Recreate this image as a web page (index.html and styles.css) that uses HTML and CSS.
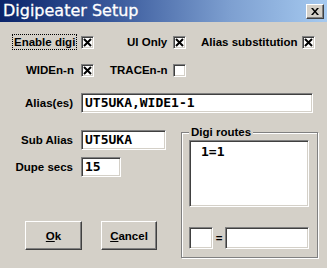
FILE: index.html
```html
<!DOCTYPE html>
<html lang="en">
<head>
  <meta charset="UTF-8" />
  <title>Digipeater Setup</title>
  <link rel="stylesheet" href="styles.css">
</head>
<body>
  <div class="dialog">
    <div class="titlebar">
      <span class="title">Digipeater Setup</span>
      <span class="close" aria-label="Close">
        <svg width="8" height="7" viewBox="0 0 8 7"><path d="M0 0h2l2 2.5L6 0h2L5 3.5L8 7H6L4 4.5L2 7H0l3-3.5z" fill="#000"/></svg>
      </span>
    </div>

    <div class="opts opts-a">
      <span class="lbl lbl-enable"><span class="focus-box">Enable digi</span></span>
      <span class="cb"><svg width="9" height="9" viewBox="0 0 9 9"><path d="M1 1l7 7M8 1L1 8" stroke="#000" stroke-width="2"/></svg></span>
      <span class="lbl lbl-ui">UI Only</span>
      <span class="cb"><svg width="9" height="9" viewBox="0 0 9 9"><path d="M1 1l7 7M8 1L1 8" stroke="#000" stroke-width="2"/></svg></span>
      <span class="lbl lbl-subst">Alias substitution</span>
      <span class="cb"><svg width="9" height="9" viewBox="0 0 9 9"><path d="M1 1l7 7M8 1L1 8" stroke="#000" stroke-width="2"/></svg></span>
    </div>

    <div class="opts opts-b">
      <span class="lbl lbl-wide">WIDEn-n</span>
      <span class="cb"><svg width="9" height="9" viewBox="0 0 9 9"><path d="M1 1l7 7M8 1L1 8" stroke="#000" stroke-width="2"/></svg></span>
      <span class="lbl lbl-trace">TRACEn-n</span>
      <span class="cb"></span>
    </div>

    <div class="field field-alias">
      <span class="field-label">Alias(es)</span>
      <span class="edit edit-alias">UT5UKA,WIDE1-1</span>
    </div>

    <div class="lower">
      <div class="left-col">
        <div class="field">
          <span class="field-label">Sub Alias</span>
          <span class="edit edit-sub">UT5UKA</span>
        </div>
        <div class="field field-dupe">
          <span class="field-label">Dupe secs</span>
          <span class="edit edit-dupe">15</span>
        </div>
        <div class="buttons">
          <span class="btn btn-ok"><u>O</u>k</span>
          <span class="btn btn-cancel"><u>C</u>ancel</span>
        </div>
      </div>

      <fieldset class="routes">
        <legend>Digi routes</legend>
        <div class="listbox">
          <div class="list-item">1=1</div>
        </div>
        <div class="route-edit">
          <span class="edit edit-from"></span>
          <span class="eq">=</span>
          <span class="edit edit-to"></span>
        </div>
      </fieldset>
    </div>
  </div>
</body>
</html>
```

FILE: styles.css
```css
body {
  margin: 0;
  background: #d4d0c8;
  font-family: "Liberation Sans", Arial, sans-serif;
  font-size: 11.5px;
  font-weight: bold;
  color: #000;
}

.dialog {
  width: 327px;
  height: 268px;
  background: #d4d0c8;
  overflow: hidden;
}

/* Title bar */
.titlebar {
  height: 22px;
  display: flex;
  align-items: center;
  padding-left: 3px;
  background: linear-gradient(to right, #0a246a 0%, #3a5a9c 35%, #7d9fd0 70%, #a6caf0 100%);
}
.title {
  font-family: "DejaVu Sans", sans-serif;
  font-weight: normal;
  font-size: 16px;
  color: #fff;
  line-height: 22px;
  -webkit-text-stroke: 0.3px #fff;
}
.close {
  margin-left: auto;
  margin-right: 3px;
  width: 18px;
  height: 15px;
  box-sizing: border-box;
  display: flex;
  align-items: center;
  justify-content: center;
  background: #d4d0c8;
  border: 1px solid;
  border-color: #fff #404040 #404040 #fff;
  box-shadow: inset -1px -1px 0 #808080;
}

/* Checkbox rows */
.opts {
  display: grid;
  align-items: center;
  height: 16px;
}
.opts-a {
  margin-top: 12px;
  grid-template-columns: 81px 13px 79px 13px 116px 13px;
}
.opts-b {
  margin-top: 12px;
  grid-template-columns: 81px 13px 79px 13px;
}
.lbl {
  white-space: nowrap;
}
.lbl-enable { padding-left: 12px; }
.lbl-ui { padding-left: 33px; }
.lbl-subst { padding-left: 15px; }
.lbl-wide { padding-left: 26px; }
.lbl-trace { padding-left: 16px; }

.focus-box {
  display: inline-block;
  border: 1px dotted #000;
  padding: 0 1px;
  line-height: 14px;
}

.cb {
  width: 13px;
  height: 13px;
  box-sizing: border-box;
  background: #fff;
  border: 1px solid;
  border-color: #808080 #fff #fff #808080;
  box-shadow: inset 1px 1px 0 #404040, inset -1px -1px 0 #d4d0c8;
  display: flex;
  align-items: center;
  justify-content: center;
}

/* Edit fields */
.field {
  display: flex;
  align-items: center;
}
.field-alias {
  margin-top: 15px;
}
.field-label {
  width: 73px;
  text-align: right;
  margin-right: 8px;
  white-space: nowrap;
}
.edit {
  display: block;
  height: 20px;
  box-sizing: border-box;
  background: #fff;
  border: 1px solid;
  border-color: #808080 #fff #fff #808080;
  box-shadow: inset 1px 1px 0 #404040, inset -1px -1px 0 #d4d0c8;
  font-family: "DejaVu Sans Mono", monospace;
  font-size: 13px;
  font-weight: bold;
  line-height: 18px;
  padding-left: 3px;
  white-space: nowrap;
}
.edit-alias { width: 232px; }
.edit-sub { width: 85px; }
.edit-dupe { width: 40px; }

/* Lower part */
.lower {
  display: flex;
  margin-top: 13px;
}
.left-col {
  width: 181px;
  padding-top: 4px;
}
.field-dupe {
  margin-top: 7px;
}
.buttons {
  display: flex;
  gap: 19px;
  margin-top: 44px;
  padding-left: 25px;
}
.btn {
  width: 57px;
  height: 29px;
  box-sizing: border-box;
  display: flex;
  align-items: center;
  justify-content: center;
  border: 1px solid;
  border-color: #fff #404040 #404040 #fff;
  box-shadow: inset -1px -1px 0 #808080;
}
.btn-cancel {
  width: 56px;
}

/* Group box */
.routes {
  width: 137px;
  height: 132px;
  box-sizing: border-box;
  margin: 0;
  padding: 2px 8px 0 7px;
  border: 1px solid #808080;
  box-shadow: inset 1px 1px 0 #fff, 1px 1px 0 #fff;
}
.routes legend {
  padding: 0 2px;
  margin-left: 0;
  line-height: 12px;
  background: #d4d0c8;
}
.listbox {
  height: 67px;
  box-sizing: border-box;
  background: #fff;
  border: 1px solid;
  border-color: #808080 #fff #fff #808080;
  box-shadow: inset 1px 1px 0 #404040, inset -1px -1px 0 #d4d0c8;
  padding: 3px 0 0 11px;
}
.list-item {
  font-family: "DejaVu Sans Mono", monospace;
  font-size: 13px;
  line-height: 16px;
}
.route-edit {
  display: flex;
  align-items: center;
  margin-top: 20px;
}
.route-edit .edit {
  height: 22px;
}
.edit-from { width: 24px; }
.eq {
  width: 12px;
  text-align: center;
}
.edit-to { flex: 1; }
```
